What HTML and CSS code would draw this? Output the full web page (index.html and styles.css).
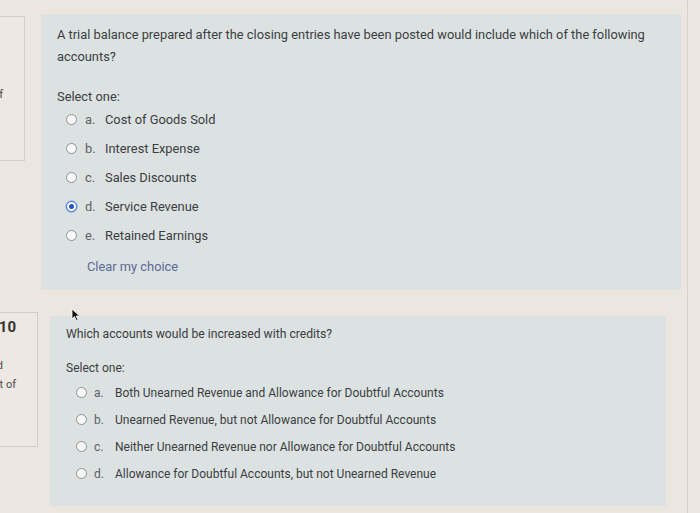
FILE: index.html
```html
<!DOCTYPE html>
<html lang="en">
<head>
<meta charset="utf-8">
<title>Quiz</title>
<link rel="stylesheet" href="styles.css">
</head>
<body>
<div class="page">
  <div class="que que-one">
    <div class="info info-one">
      <div class="info-line info-spacer">&nbsp;</div>
      <div class="info-line info-status">&nbsp;</div>
      <div class="info-line info-mark">Marked out of</div>
    </div>
    <div class="content content-one">
      <div class="qtext">A trial balance prepared after the closing entries have been posted would include which of the following accounts?</div>
      <div class="prompt">Select one:</div>
      <div class="answers">
        <div class="opt"><span class="radio"></span><span class="letter">a.</span><span class="label">Cost of Goods Sold</span></div>
        <div class="opt"><span class="radio"></span><span class="letter">b.</span><span class="label">Interest Expense</span></div>
        <div class="opt"><span class="radio"></span><span class="letter">c.</span><span class="label">Sales Discounts</span></div>
        <div class="opt"><span class="radio radio-on"></span><span class="letter">d.</span><span class="label">Service Revenue</span></div>
        <div class="opt"><span class="radio"></span><span class="letter">e.</span><span class="label">Retained Earnings</span></div>
      </div>
      <div class="clear">Clear my choice</div>
    </div>
  </div>

  <div class="que que-two">
    <div class="info info-two">
      <div class="info-line info-num"><span>Question <b>10</b></span></div>
      <div class="info-line info-status2"><span>Answered</span></div>
      <div class="info-line info-mark"><span>Marked out of</span></div>
    </div>
    <div class="content content-two">
      <svg class="cursor" width="10" height="14" viewBox="0 0 10 14"><path d="M1 1 L1 11 L3.5 8.6 L5.4 12.8 L7 12.1 L5.2 8 L8.6 8 Z" fill="#111" stroke="#fff" stroke-width="0.8"/></svg>
      <div class="qtext">Which accounts would be increased with credits?</div>
      <div class="prompt">Select one:</div>
      <div class="answers">
        <div class="opt"><span class="radio"></span><span class="letter">a.</span><span class="label">Both Unearned Revenue and Allowance for Doubtful Accounts</span></div>
        <div class="opt"><span class="radio"></span><span class="letter">b.</span><span class="label">Unearned Revenue, but not Allowance for Doubtful Accounts</span></div>
        <div class="opt"><span class="radio"></span><span class="letter">c.</span><span class="label">Neither Unearned Revenue nor Allowance for Doubtful Accounts</span></div>
        <div class="opt"><span class="radio"></span><span class="letter">d.</span><span class="label">Allowance for Doubtful Accounts, but not Unearned Revenue</span></div>
      </div>
    </div>
  </div>
</div>
</body>
</html>
```

FILE: styles.css
```css
html, body {
  margin: 0;
  padding: 0;
}
body {
  width: 700px;
  height: 513px;
  overflow: hidden;
  background: #ece5e0;
  font-family: Roboto, "Liberation Sans", Arial, sans-serif;
  color: #3b3d42;
}
.page {
  width: 688px;
  height: 513px;
  box-sizing: border-box;
  border-right: 1px solid #d8d0cb;
  padding-top: 14px;
  overflow: hidden;
}
.que {
  display: flex;
  align-items: flex-start;
}
.que-two {
  margin-top: 22px;
}
.info {
  flex: none;
  width: 100px;
  box-sizing: border-box;
  border: 1px solid #d3cdc8;
  background: #eee8e3;
  overflow: hidden;
  font-size: 11px;
  color: #4a4a4a;
}
.info-one {
  margin-left: -75px;
  margin-top: 2px;
  height: 145px;
  padding-top: 10px;
}
.info-two {
  margin-left: -62px;
  height: 135px;
  padding-top: 4px;
}
.info-line {
  display: flex;
  justify-content: flex-end;
  white-space: nowrap;
  padding-right: 21px;
}
.info-line > span { flex: none; }
.info-spacer { height: 22px; }
.info-status { height: 34px; }
.info-num {
  font-size: 15px;
  line-height: 20px;
  height: 22px;
  padding-right: 21px;
}
.info-num b { font-weight: 700; color: #333; }
.info-status2 {
  line-height: 14px;
  margin-top: 20px;
  padding-right: 34px;
}
.info-mark {
  line-height: 14px;
  margin-top: 5px;
}
.content {
  position: relative;
  box-sizing: border-box;
  background: #dbe2e1;
}
.content-one {
  margin-left: 16px;
  width: 640px;
  height: 276px;
  padding: 10px 16px 0 16px;
  font-size: 12.85px;
}
.content-two {
  margin-left: 12px;
  margin-top: 4px;
  width: 616px;
  height: 190px;
  padding: 7px 16px 0 16px;
  font-size: 12px;
}
.qtext {
  line-height: 22px;
}
.content-two .qtext {
  font-size: 12.2px;
}
.content-one .prompt {
  margin-top: 18px;
  line-height: 22px;
}
.content-two .prompt {
  margin-top: 12px;
  line-height: 22px;
}
.answers {
  display: flex;
  flex-direction: column;
}
.opt {
  display: flex;
  align-items: center;
  white-space: nowrap;
}
.content-one .opt {
  height: 29px;
  padding-left: 9px;
}
.content-one .answers { margin-top: -3px; }
.content-two .answers { margin-top: 0; }
.content-two .opt {
  height: 27px;
  padding-left: 10px;
}
.radio {
  flex: none;
  width: 11px;
  height: 11px;
  box-sizing: border-box;
  border-radius: 50%;
  border: 1px solid #8e9092;
  background: #f8f8f8;
  position: relative;
}
.radio-on {
  border: 1px solid #3e6fd6;
  background: #fff;
  box-shadow: 0 0 0 1px #a9c0ee;
}
.radio-on::after {
  content: "";
  position: absolute;
  left: 2px;
  top: 2px;
  width: 5px;
  height: 5px;
  border-radius: 50%;
  background: #2452c8;
}
.letter {
  flex: none;
  color: #5d6066;
}
.content-one .letter {
  margin-left: 8px;
  width: 20px;
}
.content-two .letter {
  margin-left: 7px;
  width: 21px;
}
.clear {
  color: #5a6898;
  padding-left: 30px;
  margin-top: 6px;
  line-height: 22px;
}
.cursor {
  position: absolute;
  left: 21px;
  top: -8px;
}
```
